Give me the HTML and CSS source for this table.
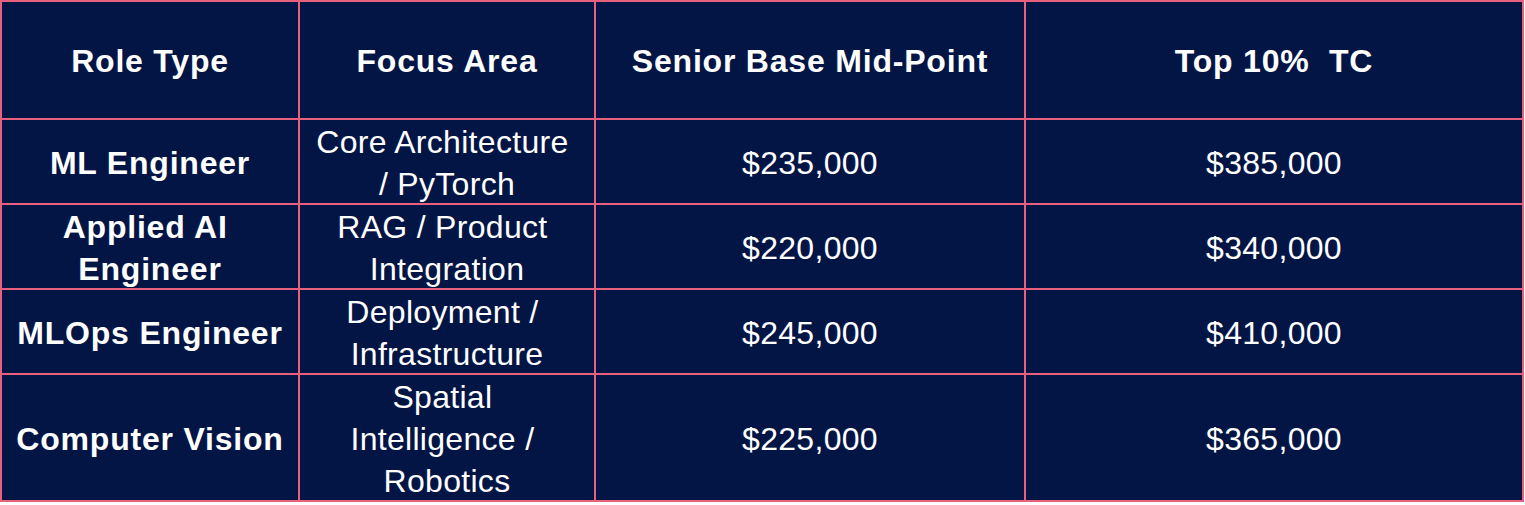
FILE: index.html
```html
<!DOCTYPE html>
<html lang="en">
<head>
<meta charset="utf-8">
<title>AI Role Compensation</title>
<link rel="stylesheet" href="styles.css">
</head>
<body>
<div class="table" role="table">
  <div class="cell head" role="columnheader">Role Type</div>
  <div class="cell head" role="columnheader">Focus Area</div>
  <div class="cell head" role="columnheader">Senior Base Mid-Point</div>
  <div class="cell head" role="columnheader">Top 10%&nbsp; TC</div>

  <div class="cell role" role="cell">ML Engineer</div>
  <div class="cell" role="cell">Core Architecture&nbsp;<br>/ PyTorch</div>
  <div class="cell" role="cell">$235,000</div>
  <div class="cell" role="cell">$385,000</div>

  <div class="cell role" role="cell">Applied AI&nbsp;<br>Engineer</div>
  <div class="cell" role="cell">RAG / Product&nbsp;<br>Integration</div>
  <div class="cell" role="cell">$220,000</div>
  <div class="cell" role="cell">$340,000</div>

  <div class="cell role" role="cell">MLOps Engineer</div>
  <div class="cell" role="cell">Deployment /&nbsp;<br>Infrastructure</div>
  <div class="cell" role="cell">$245,000</div>
  <div class="cell" role="cell">$410,000</div>

  <div class="cell role" role="cell">Computer Vision</div>
  <div class="cell" role="cell">Spatial&nbsp;<br>Intelligence /&nbsp;<br>Robotics</div>
  <div class="cell" role="cell">$225,000</div>
  <div class="cell" role="cell">$365,000</div>
</div>
</body>
</html>
```
FILE: styles.css
```css
html, body {
  margin: 0;
  padding: 0;
  background: #ffffff;
}

.table {
  display: grid;
  grid-template-columns: 298px 296px 430px 498px;
  grid-template-rows: 118px 85px 85px 85px 127px;
  width: 1524px;
  box-sizing: border-box;
  border-top: 2px solid #e9607c;
  border-left: 2px solid #e9607c;
  background: #021545;
  font-family: "Liberation Sans", Arial, sans-serif;
  color: #ffffff;
}

.cell {
  box-sizing: border-box;
  border-right: 2px solid #e9607c;
  border-bottom: 2px solid #e9607c;
  display: flex;
  align-items: center;
  justify-content: center;
  text-align: center;
  font-size: 32px;
  line-height: 42px;
  letter-spacing: 0.3px;
  padding: 2px 6px 0;
}

.head,
.role {
  font-weight: bold;
  letter-spacing: 0.8px;
}
```
